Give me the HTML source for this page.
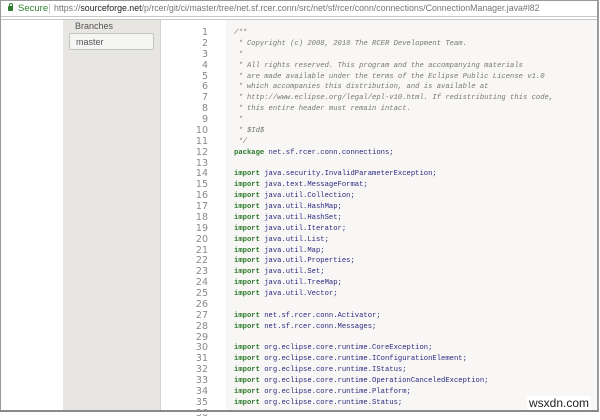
<!DOCTYPE html>
<html><head><style>
*{margin:0;padding:0;box-sizing:border-box}
body{width:600px;height:414px;overflow:hidden;background:#fff;position:relative;font-family:"Liberation Sans",sans-serif}
.frame{position:absolute;left:0;top:0;width:599px;height:413px;border:1px solid #9a9a9a;border-right:2px solid #9a9a9a;border-bottom:2px solid #8a8a8a}
.bar{position:absolute;left:1px;top:1px;width:596px;height:16px;background:#fff;border-bottom:1px solid #c8c8c8;font-size:9.5px;line-height:15px;color:#555}
.bar2{position:absolute;left:1px;top:19px;width:596px;height:1px;background:#c8c8c8}
.side{position:absolute;left:63px;top:20px;width:98px;height:392px;background:#e8e6e3;border-right:1px solid #d6d4d0}
.code{position:absolute;left:226px;top:20px;width:371px;height:392px;background:#f8f7f5}
.nums{position:absolute;left:170px;top:28px;width:38px;text-align:right;font-family:"DejaVu Sans",sans-serif;font-size:9.5px;color:#888;line-height:10.87px}
pre{position:absolute;left:234px;top:28px;font-family:"Liberation Mono",monospace;font-size:7.2px;line-height:10.87px;color:#2a2a80}
.c{color:#777;font-style:italic}
.k{color:#2b7a2b;font-weight:bold}
</style></head><body>
<div class="frame"></div>
<div class="bar"><span style="position:absolute;left:7px;top:5px;width:5px;height:5px;background:#2d7d2d;border-radius:1px"></span><span style="position:absolute;left:7.5px;top:2px;width:4px;height:4px;border:1px solid #2d7d2d;border-bottom:none;border-radius:2px 2px 0 0"></span><span style="position:absolute;left:17px;color:#2d7d2d">Secure</span><span style="position:absolute;left:48px;top:3px;width:1px;height:10px;background:#ccc"></span><span style="position:absolute;left:53px;color:#777;font-size:8.8px">https://<span style="color:#222">sourceforge.net</span>/p/rcer/git/ci/master/tree/net.sf.rcer.conn/src/net/sf/rcer/conn/connections/ConnectionManager.java#l82</span></div>
<div class="bar2"></div>
<div class="side">
<div style="position:absolute;left:12px;top:1px;font-size:9px;color:#555">Branches</div>
<div style="position:absolute;left:6px;top:13px;width:85px;height:17px;background:#f5f5f4;border:1px solid #c4c4c4;border-radius:2px;font-size:9px;color:#555;padding:3px 0 0 6px">master</div>
</div>
<div class="code"></div>
<div class="nums">1<br>2<br>3<br>4<br>5<br>6<br>7<br>8<br>9<br>10<br>11<br>12<br>13<br>14<br>15<br>16<br>17<br>18<br>19<br>20<br>21<br>22<br>23<br>24<br>25<br>26<br>27<br>28<br>29<br>30<br>31<br>32<br>33<br>34<br>35<br>36</div>
<pre><span class="c">/**
 * Copyright (c) 2008, 2010 The RCER Development Team.
 *
 * All rights reserved. This program and the accompanying materials
 * are made available under the terms of the Eclipse Public License v1.0
 * which accompanies this distribution, and is available at
 * http://www.eclipse.org/legal/epl-v10.html. If redistributing this code,
 * this entire header must remain intact.
 *
 * $Id$
 */</span>
<span class="k">package</span> net.sf.rcer.conn.connections;

<span class="k">import</span> java.security.InvalidParameterException;
<span class="k">import</span> java.text.MessageFormat;
<span class="k">import</span> java.util.Collection;
<span class="k">import</span> java.util.HashMap;
<span class="k">import</span> java.util.HashSet;
<span class="k">import</span> java.util.Iterator;
<span class="k">import</span> java.util.List;
<span class="k">import</span> java.util.Map;
<span class="k">import</span> java.util.Properties;
<span class="k">import</span> java.util.Set;
<span class="k">import</span> java.util.TreeMap;
<span class="k">import</span> java.util.Vector;

<span class="k">import</span> net.sf.rcer.conn.Activator;
<span class="k">import</span> net.sf.rcer.conn.Messages;

<span class="k">import</span> org.eclipse.core.runtime.CoreException;
<span class="k">import</span> org.eclipse.core.runtime.IConfigurationElement;
<span class="k">import</span> org.eclipse.core.runtime.IStatus;
<span class="k">import</span> org.eclipse.core.runtime.OperationCanceledException;
<span class="k">import</span> org.eclipse.core.runtime.Platform;
<span class="k">import</span> org.eclipse.core.runtime.Status;</pre>
<div style="position:absolute;left:0;top:411px;width:600px;height:3px;background:#fff"></div>
<div style="position:absolute;left:0;top:410px;width:599px;height:2px;background:#8a8a8a"></div>
<div style="position:absolute;left:527px;top:396px;font-size:12px;color:#222;background:#fff;padding:0 2px">wsxdn.com</div>
</body></html>
